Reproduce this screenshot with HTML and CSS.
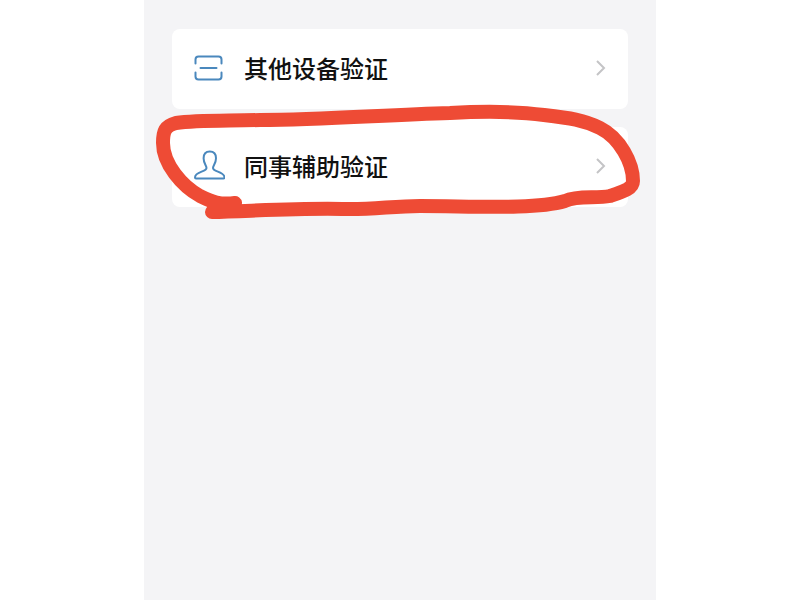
FILE: index.html
```html
<!DOCTYPE html>
<html lang="zh-CN">
  <head>
    <meta charset="UTF-8" />
    <meta name="viewport" content="width=device-width, initial-scale=1.0" />
    <title>验证方式</title>
    <link rel="stylesheet" href="styles.css">
  </head>
  <body>
    <main class="panel">
      <button type="button" class="card">
        <svg class="icon" viewBox="0 0 32 32" aria-hidden="true">
          <path d="M2.5 11.5V7.5Q2.5 4.5 5.5 4.5H25.5Q28.5 4.5 28.5 7.5V11.5M2.5 20.5V24.5Q2.5 27.5 5.5 27.5H25.5Q28.5 27.5 28.5 24.5V20.5M7.5 16H23.5" />
        </svg>
        <span class="label">其他设备验证</span>
        <svg class="arrow" viewBox="0 0 12 18" aria-hidden="true">
          <path d="M2 2L9 9L2 16" />
        </svg>
      </button>
      <button type="button" class="card">
        <!-- 手绘红圈 -->
        <svg class="mark" viewBox="0 0 456 80" preserveAspectRatio="none" aria-hidden="true">
          <path d="M63 76C48 78 40 75 28 69C10 59 -9 37 -9 16C-9 4 -7 -1 4 -4C25 -7 55 -6 88 -7C150 -7 210 -12 278 -14C315 -16 342 -16 372 -12C398 -9 412 -7 428 1C448 11 461 36 461 54C461 62 450 65 438 69C424 72 406 68 393 74C362 83 300 79 248 79C220 79 200 83 170 82C130 81 80 84 40 85" />
        </svg>
        <svg class="icon" viewBox="0 0 32 32" aria-hidden="true">
          <path d="M13.5 18C13.5 15.6 10.6 13.6 10.6 8.2C10.6 4 13 1.4 16.8 1.4C20.6 1.4 23 4 23 8.2C23 13.6 20 15.6 20 18C20 22 31.5 21.5 31.5 27.5Q31.5 28.4 30.5 28.4H3Q2 28.4 2 27.5C2 21.5 13.5 22 13.5 18Z" />
        </svg>
        <span class="label">同事辅助验证</span>
        <svg class="arrow" viewBox="0 0 12 18" aria-hidden="true">
          <path d="M2 2L9 9L2 16" />
        </svg>
      </button>
    </main>
  </body>
</html>
```
FILE: styles.css
```css
body {
  margin: 0;
  background-color: #fff;
  font-family: "Noto Sans CJK SC", sans-serif;
}

.panel {
  box-sizing: border-box;
  display: flex;
  flex-direction: column;
  gap: 18px;
  width: 64%;
  min-height: 100vh;
  margin: 0 auto;
  padding: 29px 28px;
  background-color: #f4f4f6;
}

.card {
  position: relative;
  display: flex;
  align-items: center;
  padding: 19px 21px 21px;
  border: 0;
  border-radius: 8px;
  background-color: #fff;
  color: #111;
  font-family: inherit;
  font-size: 24px;
  font-weight: 500;
  line-height: 40px;
  text-align: left;
  cursor: pointer;
}

.icon,
.label,
.arrow {
  z-index: 1;
}

.icon {
  width: 32px;
  height: 32px;
  fill: none;
  stroke: #4a88bd;
  stroke-width: 2;
  stroke-linecap: round;
}

.label {
  flex: 1;
  margin-left: 19px;
}

.arrow {
  width: 12px;
  height: 18px;
  fill: none;
  stroke: #c4c4c6;
  stroke-width: 2;
}

/* 红圈超出卡片边缘，垫在文字下面 */
.mark {
  position: absolute;
  top: 0;
  left: 0;
  width: 100%;
  height: 100%;
  overflow: visible;
  fill: #fff;
  stroke: #ee4b35;
  stroke-width: 14;
  stroke-linecap: round;
  stroke-linejoin: round;
  pointer-events: none;
}
```
